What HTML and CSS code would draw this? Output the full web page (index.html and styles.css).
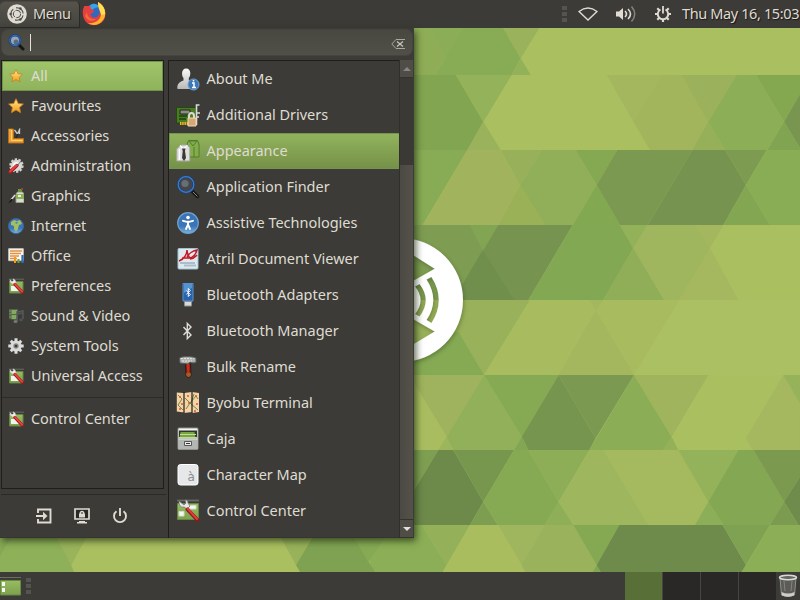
FILE: index.html
```html
<!DOCTYPE html>
<html lang="en">
<head>
<meta charset="utf-8">
<title>Desktop</title>
<link rel="stylesheet" href="styles.css">
</head>
<body>
<svg class="defs" width="0" height="0" aria-hidden="true">
<defs>
<linearGradient id="gold" x2="0" y2="1"><stop stop-color="#ffeb91"/><stop offset="1" stop-color="#f09a16"/></linearGradient>
<linearGradient id="blue" x2="0" y2="1"><stop stop-color="#3d72b4"/><stop offset=".65" stop-color="#3975b8"/><stop offset="1" stop-color="#79b5e4"/></linearGradient>
<linearGradient id="silver" x2="0" y2="1"><stop stop-color="#fafafa"/><stop offset="1" stop-color="#b9b9b9"/></linearGradient>
<linearGradient id="leaf" x2="0" y2="1"><stop stop-color="#98bb64"/><stop offset="1" stop-color="#7da14c"/></linearGradient>
<symbol id="star" viewBox="0 0 16 16"><path d="M8 .7l2.200 4.700 5.200.6-3.800 3.500 1 5.200L8 12.100l-4.600 2.600 1-5.200L.6 6l5.200-.6z" fill="url(#gold)" stroke="#c97b1d" stroke-width=".8"/></symbol>
<symbol id="tools" viewBox="0 0 16 16"><path d="M.5 1h5v9.500h10V15H.5z" fill="#eba139" stroke="#b76c16"/><path d="M1.500 2h2v10.500h11" fill="none" stroke="#ffd06c"/><path d="M6.500 2l3 4L12 .5M11.500 1v5" stroke="#c7cbc8" fill="none" stroke-width="1.300"/><path d="M10 6l-2 4" stroke="#292a27" stroke-width="1.500"/></symbol>
<symbol id="admin" viewBox="0 0 16 16"><circle cx="8.500" cy="7.500" r="5.700" fill="#dcdcda" stroke="#d1d1cf" stroke-width="3" stroke-dasharray="2.200 1.300"/><circle cx="8" cy="7" r="3" fill="#f6f6f3"/><path d="M2 14L9 7.500" stroke="#a51d20" stroke-width="3.400" stroke-linecap="round"/><path d="M2 13.500L8.500 7.500" stroke="#ef3c3e" stroke-width="1.800" stroke-linecap="round"/><path d="M9 8l4-5" stroke="#73736f" stroke-width="1"/></symbol>
<symbol id="paint" viewBox="0 0 16 16"><path d="M8 6l1.500-2h5L16 6v8.500H8z" fill="#d9ddd0" stroke="#999f8c"/><path d="M8 6h8v5H8z" fill="#8bb057"/><path d="M10 1h4v3h-4z" fill="#689340"/><path d="M13 0h2v2h-2z" fill="#b33630"/><path d="M10 7h3v2h-3z" fill="#e7efdc"/><path d="M7 7L3 12" stroke="#d6d7d6" stroke-width="1.600"/><path d="M5 11l-2 3-3 1c2-1 2-3 3-4z" fill="#181817"/></symbol>
<symbol id="globe" viewBox="0 0 16 16"><circle cx="8" cy="8" r="7.600" fill="url(#blue)" stroke="#3468a4" stroke-width=".8"/><path d="M3 4l3-2 3 1 3-1 2 4-3 1-1 4-2 3-2-3V8L3 7z" fill="#a4be62"/><path d="M8 4l2-.5L9 6 7 5z" fill="#4a86be"/></symbol>
<symbol id="office" viewBox="0 0 16 16"><path d="M.7.700h14.600v12H.7z" fill="#fcfaf4" stroke="#c5c5bf"/><path d="M2 3h12M2 5.500h11M2 8h9M2 10.500h7" stroke="#de9140" stroke-width="1.400"/><path d="M7 9v6" stroke="#f49820" stroke-width="2"/><path d="M10.500 11v4" stroke="#70a12e" stroke-width="2"/><path d="M14.500 7v8" stroke="#326fb9" stroke-width="2.300"/></symbol>
<symbol id="control" viewBox="0 0 24 24"><path d="M1 1.500h22" stroke="#686966" stroke-width="1.800"/><path d="M1.500 4.500h21v16h-21z" fill="url(#leaf)" stroke="#648744"/><path d="M13 6.500h7v3.500h-7zM3 12.500h5v4.500H3z" fill="#f5f5f5" stroke="#d2ddc4"/><path d="M3 2c-.4 4 2 7 5 6l3 2 3-3-2-3c0-2-1-3-3-3l1 3-2 2z" fill="#e7e8e6" stroke="#737671" stroke-width=".8"/><path d="M11.500 10.500l10 10.500" stroke="#8e191b" stroke-width="3.800" stroke-linecap="round"/><path d="M11.500 9.500l9.500 10.500" stroke="#e13c3c" stroke-width="2" stroke-linecap="round"/></symbol>
<symbol id="control-small" viewBox="0 0 16 16"><path d="M1 1.200h15" stroke="#686966"/><path d="M1.500 3.500h13.500v11.500H1.500z" fill="url(#leaf)" stroke="#648744"/><path d="M3 8h4l4 5H3z" fill="#f1f3ee"/><path d="M2 1.500v2l2 2 2.500 1L8 4.500 7 2 5 .8l.5 2-1.500 1z" fill="#eeefec" stroke="#c9cbc7" stroke-width=".5"/><path d="M7 6.500l7.500 8" stroke="#8e191b" stroke-width="3.200" stroke-linecap="round"/><path d="M7 6l7.200 7.800" stroke="#ea4141" stroke-width="1.900" stroke-linecap="round"/></symbol>
<symbol id="media" viewBox="0 0 16 16"><path d="M1 1h9v12l-4-1-5-1z" fill="#4f6543"/><path d="M3.500 2H9v4H3.500zM3.500 7H9v4H3.500z" fill="#86a865"/><path d="M1.500 3h1M1.500 6h1M1.500 9h1" stroke="#a8b49c"/><path d="M9 12V4l6-1v8M9 6l6-1" stroke="#55585b" stroke-width="1.500" fill="none"/><ellipse cx="7.500" cy="13.500" rx="2" ry="1.500" fill="#74797b"/><ellipse cx="13" cy="11.800" rx="2" ry="1.500" fill="#4e5154"/></symbol>
<symbol id="gear" viewBox="0 0 16 16"><g stroke="#dcdddb" stroke-width="3"><path d="M8 .3v15.400M.3 8h15.400M2.700 2.700l10.600 10.600M13.300 2.700L2.700 13.300"/></g><circle cx="8" cy="8" r="5.600" fill="#dadbd9"/><circle cx="8" cy="8" r="2.700" fill="#8a8c87"/><circle cx="8" cy="8" r="1.300" fill="#363833"/></symbol>
<symbol id="lens" viewBox="0 0 24 24"><path d="M16 16l5.500 5.500" stroke="#171816" stroke-width="3.500" stroke-linecap="round"/><path d="M17 17l4.500 4.500" stroke="#85877f" stroke-width="1"/><circle cx="10" cy="9.500" r="7.800" fill="#43464a" stroke="#1b427e" stroke-width="2.800"/><circle cx="10" cy="9.500" r="7.800" fill="none" stroke="#427bc2" stroke-width="1.200"/><circle cx="9" cy="8.500" r="3.600" fill="#85898e" opacity=".6"/></symbol>
<symbol id="lens-small" viewBox="0 0 17 17"><path d="M11 11l4 4" stroke="#171816" stroke-width="3" stroke-linecap="round"/><circle cx="7" cy="6.500" r="5.200" fill="#98a8bc" stroke="#1b427e" stroke-width="2.400"/><circle cx="7" cy="6.500" r="5.200" fill="none" stroke="#3c70b4"/><circle cx="8" cy="8" r="2.500" fill="#5b6b80"/></symbol>
<symbol id="person" viewBox="0 0 24 24"><path d="M1.500 22c-.8-5 2-7 6-8.500V11c-2-2-2.500-9.500 2.700-9.500S15 9 12.800 11v2.500c4 1.500 6 4 5.500 8.500z" fill="url(#silver)"/><circle cx="17.500" cy="17.500" r="5.500" fill="#3b77b9" stroke="#79a5ce"/><path d="M16 16h2v4.500M16 20.500h4M17.500 13v1.600" fill="none" stroke="#fff" stroke-width="1.500"/></symbol>
<symbol id="driver" viewBox="0 0 24 24"><path d="M.5 4.500H20V20H.5z" fill="#4b7b21" stroke="#24480f"/><path d="M4 7h10v4H4z" fill="#8a8c85" stroke="#222"/><path d="M3 13h8M3 16h7" stroke="#244f18" stroke-width="2"/><path d="M4 20.500h9" stroke="#f0bb24" stroke-width="3" stroke-dasharray="1.500 .7"/><path d="M20.500 22V2h3M21 10h3M21 14h2" stroke="#d9dbd6" stroke-width="1.600" fill="none"/><path d="M13 15v-2c0-4 5-4 5 0v2" fill="none" stroke="#dadbd4" stroke-width="2"/><path d="M12 15h8v8h-8z" fill="#d6a878" stroke="#f1d7ae"/></symbol>
<symbol id="shirts" viewBox="0 0 24 24"><path d="M11 5l1.500-3.500h9L23 5v13h-9z" fill="#83ad4b" stroke="#537c2d"/><path d="M13 2l4 5 4-5M14 2h6M18 8v10" stroke="#537c2d" fill="none"/><path d="M.8 10l3-3 2-1h5l3 2.500V22H.8z" fill="#dfe0dd" stroke="#a6a8a2"/><path d="M4 6.500l3.500 3.500 4-3.500M3.500 10v11" stroke="#fff" fill="none" stroke-width="1.300"/><path d="M6 9.500h3.500L9 12l1 7-2 3-2-3 .700-7z" fill="#393a38"/></symbol>
<symbol id="access" viewBox="0 0 24 24"><circle cx="12" cy="12" r="10.300" fill="url(#blue)" stroke="#6fa3d1" stroke-width="1.200"/><circle cx="12" cy="6.500" r="1.800" fill="#fff"/><path d="M7 9.800l4 1h2l4-1M12 11v3M12 13.500l-2 4.500M12 13.500l2 4.500" stroke="#fff" stroke-width="1.900" stroke-linecap="round" fill="none"/></symbol>
<symbol id="atril" viewBox="0 0 24 24"><rect x="2" y="1.500" width="20" height="20.500" rx="1" fill="#dfe9ed" stroke="#9cc4d4"/><path d="M4 16h15M8 18.500h12" stroke="#a9becb" stroke-width="2"/><path d="M3 14c6-2 8-8 8-11 0 3 2 8 4 9M6 11h7c4 0 7-4 8-8-6 1-8 4-10 7M14 12c4 0 5-2 7-4" fill="none" stroke="#c51623" stroke-width="1.500"/></symbol>
<symbol id="usb" viewBox="0 0 24 24"><path d="M7 .5h10V18H7z" fill="#2862b0" stroke="#5a92cd"/><path d="M8 1h8v4L8 10z" fill="#5393d0"/><path d="M8.500 18.500h7V23h-7z" fill="#d7dad8" stroke="#8c918d"/><path d="M10.300 7.500l4 4-2 2V5.500l2 2-4 4" stroke="#fff" fill="none"/></symbol>
<symbol id="bt" viewBox="0 0 24 24"><path d="M7.500 8l7.500 8-3.700 3.500V4.500L15 8l-7.500 8" fill="none" stroke="#deded9" stroke-width="1.400"/></symbol>
<symbol id="hammer" viewBox="0 0 24 24"><path d="M9.500 9h5L15 20c0 3-5 3-5 0z" fill="#742b18" stroke="#301a13"/><path d="M10.500 9l3-1v7l-2 5z" fill="#d9251a"/><path d="M10 19c0 4 5 4 5 0l-1-1.500h-3z" fill="#a75b20"/><path d="M3.500 3C6 1 16 1 20 3v4.500l-3 .5c-2-1-4-1-5 1L4 8z" fill="#aeb2ae" stroke="#555b57"/><path d="M5 3.500l13 .2M6 6h10" stroke="#e3e5e2" stroke-dasharray="2 1"/></symbol>
<symbol id="map" viewBox="0 0 24 24"><path d="M.8 1.500L8 2v19.500l-7.200-1zM8 2l8-1v20l-8 1zM16 1l7 1v19l-7 1z" fill="#f4d3a6"/><path d="M2 4l4 4-4 6 5 5M9 7l5 5 6-7 2 3M10 18l4-6 8 7M18 3l-3 9" fill="none" stroke="#748b44"/><path d="M3 6h2M5 13h2M3 18h2M11 5h2M12 12h2M19 5h2M20 13h2M18 20h2" stroke="#d35a3b" stroke-width="1.500"/><path d="M8 1v21M16 1v21" stroke="#201d1a" stroke-width="1.200"/></symbol>
<symbol id="drawer" viewBox="0 0 24 24"><rect x="2" y="1" width="20" height="21.500" rx="1" fill="url(#silver)" stroke="#8f928e"/><path d="M3 3.500h18v8H3z" fill="#30382a"/><path d="M4.500 5h14l1 6.500h-16z" fill="#78a541"/><path d="M4 7.500h16M3 10.500h18" stroke="#c1da9a"/><path d="M2.500 11.500h19V22h-19z" fill="#b3b6b3"/><path d="M2.500 12h19" stroke="#e5e6e4"/><path d="M8.500 14.500h7v4h-7z" fill="#eee" stroke="#555"/><path d="M10 16.500h4" stroke="#333"/></symbol>
<symbol id="charmap" viewBox="0 0 24 24"><rect x="2" y="1.500" width="20" height="20.500" rx="2.500" fill="#e5e7e9" stroke="#fff"/><text x="11.500" y="17.500" class="glyph">à</text></symbol>
</defs>
</svg>

<svg class="wallpaper" viewBox="0 0 800 600" aria-hidden="true">
<defs>
<filter id="soft" x="-20%" y="-20%" width="140%" height="140%"><feDropShadow dx="1" dy="2" stdDeviation="2" flood-color="#3c5420" flood-opacity=".5"/></filter>
</defs>
<rect width="800" height="600" fill="#aabf60"/>
<g transform="translate(400 20) scale(.33333)">
<path fill="#8fad57" d="M0 24H190L105 165H0z"/><path fill="#8bad57" d="M90 24H190L140 115z"/><path fill="#88ab55" d="M190 24H310L362 115 335 165H105z"/><path fill="#9ab25b" d="M310 24H418L362 115z"/><path fill="#93b159" d="M362 115L392 165H335z"/>
<path fill="#82a552" d="M0 165H168L250 305 202 390H0z"/><path fill="#93b25a" d="M168 165H335L250 305z"/><path fill="#9ab25b" d="M250 305L302 390H202z"/><path fill="#a4b75e" d="M620 165H785L700 305z"/><path fill="#a2b55d" d="M785 165H845L930 305 877 390H750L700 305z"/><path fill="#9bb15b" d="M845 165H1010L925 305z"/><path fill="#8cae56" d="M1010 165H1068L1152 305 1102 390H975L925 305z"/><path fill="#96b059" d="M925 305L975 390H877z"/><path fill="#83a850" d="M1068 165H1200V222L1152 305z"/><path fill="#78964f" d="M1200 222L1152 305 1200 385z"/><path fill="#81a453" d="M1152 305L1200 385V390H1102z"/>
<path fill="#88ac55" d="M0 390H202L68 615H0z"/><path fill="#a1b45d" d="M202 390H302L360 495 295 615H68z"/><path fill="#99b05b" d="M302 390H427L360 495z"/><path fill="#9ab158" d="M360 495L295 615H435z"/><path fill="#91af59" d="M427 390H527L590 495 518 615H435L360 495z"/><path fill="#85a852" d="M527 390H652L590 495z"/><path fill="#83a852" d="M590 495L518 615H660z"/><path fill="#7b9950" d="M652 390H877L743 615H660L590 495z"/><path fill="#76934f" d="M877 390H975L1038 495 970 615H743z"/><path fill="#7d9b51" d="M975 390H1100L1038 495z"/><path fill="#88ad55" d="M1100 390H1200V615H1110L1038 495z"/><path fill="#82a652" d="M1038 495L1110 615H970z"/>
<path fill="#7e9d52" d="M0 615H295L160 840H0z"/><path fill="#82a553" d="M209 615H295L248 690z"/><path fill="#76934f" d="M295 615H518L385 840H160z"/><path fill="#708f4d" d="M248 690L342 840H160z"/><path fill="#83a853" d="M518 615H660L700 685 610 840H385z"/><path fill="#92b159" d="M660 615H743L700 685z"/><path fill="#9fb55e" d="M743 615H885L930 685 838 840H792L700 685z"/><path fill="#90ae57" d="M700 685L792 840H610z"/><path fill="#a4b75e" d="M885 615H970L930 685z"/><path fill="#a5b85f" d="M930 685L1015 840H838z"/>
</g>
<g transform="translate(400 290) scale(.33333)">
<path fill="#9ab15b" d="M0 30H390L252 255H0z"/><path fill="#86aa54" d="M175 125L252 255H0L0 180z"/><path fill="#a8bb5e" d="M390 30H838L702 255H252z"/><path fill="#a4b75e" d="M587 62L702 255H476z"/><path fill="#a3b75e" d="M570 30H610L587 62z"/><path fill="#abc062" d="M838 30H1200V255H702z"/>
<path fill="#9fb35e" d="M0 255H252L140 440 42 280z"/><path fill="#a9bd60" d="M42 280L140 440 115 480H0V255z"/><path fill="#9db55b" d="M140 440L160 480H115z"/><path fill="#91b059" d="M252 255L365 440 342 480H160L140 440z"/><path fill="#86a953" d="M252 255H476L365 440z"/><path fill="#76954f" d="M476 255L587 445 568 480H385L365 440z"/><path fill="#7b9951" d="M476 255H702L587 445z"/><path fill="#82a653" d="M365 440L385 480H342z"/><path fill="#8bad56" d="M702 255L815 440 790 480H568z"/><path fill="#a0b45d" d="M702 255H925L815 440z"/><path fill="#94b158" d="M815 440L835 480H790z"/><path fill="#a5b75f" d="M1150 255L1200 340V480H1058L1038 445z"/><path fill="#96b25a" d="M1150 255H1200V340z"/>
<path fill="#7e9f52" d="M0 480H115L42 600H0z"/><path fill="#6d8a4b" d="M115 480H160L250 635 210 705H0V670z"/><path fill="#77974f" d="M160 480H342L250 635z"/><path fill="#7d9e51" d="M250 635L210 705H293z"/><path fill="#85aa53" d="M342 480H385L476 635 435 705H293L250 635z"/><path fill="#8dae57" d="M385 480H568L476 635z"/><path fill="#8eaf58" d="M476 635L435 705H520z"/><path fill="#9eb65e" d="M568 480H610L745 705H520L476 635z"/><path fill="#a5b95e" d="M610 480H835L925 635 885 705H745z"/><path fill="#94b25a" d="M835 480H1015L925 635z"/><path fill="#8dae58" d="M925 635L970 705H885z"/><path fill="#83a752" d="M1015 480H1060L1152 635 1110 705H970L925 635z"/><path fill="#7b9a50" d="M1060 480H1200V560L1152 635z"/><path fill="#6f8c4d" d="M1200 560L1152 635 1195 705H1200z"/><path fill="#7b9b51" d="M1152 635L1195 705H1110z"/>
<path fill="#8bae56" d="M-130 705H65L140 825 128 846H-80z"/><path fill="#94b159" d="M65 705H210L140 825z"/><path fill="#a9bd5f" d="M210 705H295L375 846H128z"/><path fill="#9fb55e" d="M295 705H435L365 825z"/><path fill="#9ab25b" d="M435 705H520L590 825 578 846H375L365 825z"/><path fill="#85a852" d="M520 705H658L590 825z"/><path fill="#82a752" d="M590 825L578 846H602z"/><path fill="#6f8b4c" d="M658 705H968L1038 825 1025 846H602L590 825z"/><path fill="#7fa252" d="M968 705H1110L1038 825z"/><path fill="#8bae56" d="M1110 705H1200V846H1025z"/>
</g>
<path fill="#8db058" d="M0 525H93L71 565 74 572H0z"/><path fill="#84a854" d="M0 525H18L0 556z"/><path fill="#9ab45c" d="M50 525H93L71 565z"/><path fill="#98b25b" d="M274 525H320L296 565z"/><path fill="#7fa252" d="M320 525H347L375 572H300L296 565z"/><path fill="#86a954" d="M347 525H394L368 562z"/>
<path filter="url(#soft)" fill="#fff" fill-rule="evenodd" d="M401 238a62 62 0 0 1 0 124a62 62 0 0 1 0-124zM413 255L434.700 268.700 413 281zM413 319L434.700 331.500 413 344.500zM426.500 279.500L431.500 277Q446 300 431.500 323L426.500 320Q440 300 426.500 279.500zM415 286.500L419.500 284Q432 300 419.500 316.500L415 314Q426 300 415 286.500z"/>
</svg>

<div class="desktop">
<header class="panel top">
<button class="menu-button"><svg width="20" height="20" viewBox="0 0 20 20"><circle cx="10" cy="10" r="9.800" fill="#dfdbd2"/><circle cx="10" cy="10" r="6.200" fill="none" stroke="#4b4a45" stroke-width="1.100" stroke-dasharray="10 3" stroke-dashoffset="-1.500"/><circle cx="10" cy="10" r="3.700" fill="none" stroke="#4b4a45" stroke-width="1" stroke-dasharray="6.500 1.250"/><circle cx="3.600" cy="10" r="1.200" fill="#4b4a45"/><circle cx="13.300" cy="4.500" r="1.200" fill="#4b4a45"/><circle cx="13.300" cy="15.500" r="1.200" fill="#4b4a45"/></svg><span>Menu</span></button>
<svg class="firefox" width="24" height="24" viewBox="0 0 24 24"><circle cx="12" cy="11.500" r="9.500" fill="#3268bd"/><path d="M10 2c4-1 6 1 7 3l-4 1-3 2-4-3z" fill="#36a4e7"/><path d="M2.300 4C0 8 0 15 4 20c5 5 14 4 18-2 3-6 1-13-5-17 1 4 2 6 1 9-1 6-6 7-9 4-1-2 0-3 2-3l1-3-3-1-1-3z" fill="#e54040"/><path d="M16 0c8 4 9 13 5 18-4 6-11 6-15 3 8 1 13-4 13-9-1-3-3-5-3-12z" fill="#ffb52b"/><path d="M16 0c5 3 7 7 7 12l-4 1c0-4-3-7-3-13z" fill="#ffdf55"/><path d="M5 10c0 5 4 8 9 7-3 3-9 2-11-3z" fill="#f36a35"/></svg>
<div class="tray">
<i class="grip"></i>
<svg class="wifi" width="20" height="16" viewBox="0 0 20 16"><path d="M1 5.500Q10-1.500 19 5.500L10 14z" fill="none" stroke="#dfdbd2" stroke-width="1.400"/></svg>
<svg class="volume" width="20" height="18" viewBox="0 0 20 18"><path d="M0 6.500h3L7 3v12l-4-3.500H0z" fill="#dfdbd2"/><path d="M9 6q3 3 0 6M12 4q5 5 0 10" fill="none" stroke="#dfdbd2" stroke-width="1.600"/><path d="M15.500 1.500q6.500 7.500 0 15" fill="none" stroke="#85837d" stroke-width="1.500"/></svg>
<svg class="session" width="18" height="18" viewBox="0 0 18 18"><g stroke="#dfdbd2" fill="none"><path d="M6.500 4.500a5.200 5.200 0 1 0 5 0" stroke-width="1.900"/><path d="M9 1v7.500" stroke-width="1.800"/><path d="M9 14v3M1 9h3M14 9h3M3.300 3.300l2 2M14.700 3.300l-2 2M3.300 14.700l2-2M14.700 14.700l-2-2" stroke-width="2.200"/></g></svg>
<time>Thu May 16, 15:03</time>
</div>
</header>

<main>
<section class="menu">
<div class="search"><svg width="17" height="17"><use href="#lens-small"/></svg><i class="caret"></i><svg class="clear" width="15" height="12" viewBox="0 0 15 12"><path d="M14 1.500H5L.8 6 5 10.500h9" fill="none" stroke="#aaa79f"/><path d="M6 3.500l6 5M12 3.500l-6 5" stroke="#c9c5bc" stroke-width="1.200"/></svg></div>
<div class="columns">
<div class="side">
<nav class="categories">
<a class="selected"><svg><use href="#star"/></svg>All</a>
<a><svg><use href="#star"/></svg>Favourites</a>
<a><svg><use href="#tools"/></svg>Accessories</a>
<a><svg><use href="#admin"/></svg>Administration</a>
<a><svg><use href="#paint"/></svg>Graphics</a>
<a><svg><use href="#globe"/></svg>Internet</a>
<a><svg><use href="#office"/></svg>Office</a>
<a><svg><use href="#control-small"/></svg>Preferences</a>
<a><svg><use href="#media"/></svg>Sound &amp; Video</a>
<a><svg><use href="#gear"/></svg>System Tools</a>
<a><svg><use href="#control-small"/></svg>Universal Access</a>
<hr>
<a><svg><use href="#control-small"/></svg>Control Center</a>
</nav>
<div class="actions">
<svg width="16" height="16" viewBox="0 0 16 16"><path d="M2 5V1.500h12.500v13H2V11M0 8h9" fill="none" stroke="#dfdbd2" stroke-width="1.900"/><path d="M7 3.800L11.500 8 7 12.200z" fill="#dfdbd2"/></svg>
<svg width="16" height="16" viewBox="0 0 16 16"><path d="M1 1h14v10H1z" fill="#292925" stroke="#dfdbd2" stroke-width="1.700"/><path d="M5 13h6v1h2v1.500H3V14h2z" fill="#dfdbd2"/><path d="M5 5.500h6v4H5z" fill="#dfdbd2"/><path d="M6.300 6V4.500q1.700-2 3.400 0V6" fill="none" stroke="#dfdbd2" stroke-width="1.300"/></svg>
<svg width="16" height="16" viewBox="0 0 16 16"><path d="M4.500 3.300a6 6 0 1 0 7 0" fill="none" stroke="#dfdbd2" stroke-width="1.900"/><path d="M8 0v8" stroke="#dfdbd2" stroke-width="1.900"/></svg>
</div>
</div>
<div class="apps">
<a><svg><use href="#person"/></svg>About Me</a>
<a><svg><use href="#driver"/></svg>Additional Drivers</a>
<a class="selected"><svg><use href="#shirts"/></svg>Appearance</a>
<a><svg><use href="#lens"/></svg>Application Finder</a>
<a><svg><use href="#access"/></svg>Assistive Technologies</a>
<a><svg><use href="#atril"/></svg>Atril Document Viewer</a>
<a><svg><use href="#usb"/></svg>Bluetooth Adapters</a>
<a><svg><use href="#bt"/></svg>Bluetooth Manager</a>
<a><svg><use href="#hammer"/></svg>Bulk Rename</a>
<a><svg><use href="#map"/></svg>Byobu Terminal</a>
<a><svg><use href="#drawer"/></svg>Caja</a>
<a><svg><use href="#charmap"/></svg>Character Map</a>
<a><svg><use href="#control"/></svg>Control Center</a>
</div>
<div class="scrollbar"><i class="step up"></i><i class="thumb"></i><i class="step down"></i></div>
</div>
</section>
</main>

<footer class="panel bottom">
<svg class="show" width="22" height="20" viewBox="0 0 22 20"><path d="M0 1.500h21" stroke="#69705c"/><path d="M.5 4.500h20V19H.5z" fill="url(#leaf)" stroke="#668a42"/><path d="M2 6h3v4H2zM2 12h3v4H2z" fill="#f4f6f1"/></svg>
<i class="grip"></i>
<div class="workspaces"><i class="active"></i><i></i><i></i><i></i></div>
<svg class="trash" width="20" height="24" viewBox="0 0 20 24"><path d="M2 4l1.500 17q6.500 3 13 0L18 4z" fill="#5c5b57" stroke="#8f908c"/><path d="M3.500 18q6.500 3 13 0l-.5 3.500q-6 2.500-12 0z" fill="#cdcecb"/><ellipse cx="10" cy="3.500" rx="8.500" ry="2.200" fill="#65655f" stroke="#d8dad7" stroke-width="1.500"/><path d="M6 7l1 10M14 7l-1 10" stroke="#85857f"/></svg>
</footer>
</div>
</body>
</html>
```

FILE: styles.css
```css
* { box-sizing: border-box; }
body { margin: 0; width: 800px; height: 600px; overflow: hidden; color: #dfdbd2; font: 14.5px/20px "Noto Sans", "Open Sans", sans-serif; }
svg { display: block; flex-shrink: 0; }
.defs { position: absolute; }
.wallpaper { position: absolute; inset: 0; width: 800px; height: 600px; }
.desktop { position: relative; height: 600px; display: flex; flex-direction: column; }
.panel { height: 28px; background: #3c3b37; display: flex; align-items: center; }
.top { text-shadow: 1px 1px 1px #171714; }
.menu-button { width: 80px; height: 27px; padding: 0 0 0 7px; display: flex; align-items: center; gap: 6px; color: inherit; font: inherit; text-shadow: inherit; background: linear-gradient(#55534b, #45443f); border: 1px solid #2b2a27; border-left: 0; border-top-color: #484740; border-radius: 5px 5px 0 0; }
.menu-button span { padding-bottom: 2px; letter-spacing: -.4px; }
.firefox { margin-left: 2px; }
.tray { margin-left: auto; display: flex; align-items: center; }
.grip { width: 5px; height: 17px; background: repeating-linear-gradient(#555450 0 4px, transparent 4px 6px); }
.wifi { margin-left: 11px; }
.volume { margin-left: 18px; }
.session { margin-left: 18px; }
.tray time { width: 118px; margin-left: 10px; padding-bottom: 2px; white-space: nowrap; letter-spacing: -.38px; }
main { flex: 1; }
.menu { width: 414px; height: 510px; padding: 1px 1px 0; background: #3c3b37; border-bottom: 1px solid #353430; box-shadow: 2px 3px 7px rgba(35, 48, 20, .75); }
.search { height: 27px; padding: 0 6px; display: flex; align-items: center; border-radius: 7px; background: linear-gradient(#484740, #504f48); border: 1px solid #45443e; }
.caret { width: 1px; height: 17px; margin-left: 5px; background: #e8e3d9; }
.clear { margin-left: auto; margin-top: 3px; }
.columns { display: flex; height: 478px; margin-top: 4px; }
.side { width: 167px; }
.categories { width: 163px; height: 429px; border: 1px solid #1f1e1c; }
.categories a { display: flex; align-items: center; height: 30px; padding: 0 0 2px 6px; gap: 7px; letter-spacing: -.06px; white-space: nowrap; }
.categories svg { width: 16px; height: 16px; margin-top: 2px; }
.categories .selected { background: linear-gradient(#9fc46a, #8eb35b); border: 1px solid #71934a; padding-left: 6px; gap: 8px; }
.categories .selected svg { width: 14px; height: 14px; }
.categories hr { height: 1px; border: 0; margin: 6px 0 6px; background: #2c2b28; }
.actions { height: 48px; width: 165px; margin-top: 5px; border-top: 1px solid #2b2a27; display: flex; align-items: center; gap: 22px; padding: 0 0 5px 35px; }
.apps { width: 231px; border-left: 1px solid #1f1e1c; border-top: 1px solid #1f1e1c; overflow: hidden; }
.apps a { height: 36px; display: flex; align-items: center; gap: 7px; padding: 0 0 2px 6.500px; white-space: nowrap; letter-spacing: -.02px; }
.apps svg { width: 24px; height: 24px; margin-top: 2px; }
.apps .selected { background: linear-gradient(#91b35d, #769148); border: 1px solid #74954d; border-width: 1px 0 1px 1px; padding-left: 5.500px; }
.scrollbar { width: 14px; margin-left: auto; border-left: 1px solid #302f2b; display: flex; flex-direction: column; background: #3b3935; }
.step { height: 18px; background: #504d47; border-bottom: 1px solid #35332f; display: grid; place-items: center; }
.step::before { content: ""; border: 4px solid transparent; }
.up::before { border-top: 0; border-bottom-color: #85868a; }
.down::before { border-bottom: 0; border-top-color: #e0e0dc; }
.thumb { flex: 1; margin-top: 87px; background: linear-gradient(90deg, #4b4944, #55524a); border-bottom: 1px solid #35332f; }
.glyph { font: 12px "DejaVu Sans", sans-serif; fill: #888c8f; }
.bottom { height: 28px; }
.show { margin-left: 0; }
.bottom .grip { margin-left: 4px; }
.workspaces { margin-left: auto; height: 28px; display: flex; gap: 1px; background: #464540; }
.workspaces i { width: 37px; background: #292826; }
.workspaces .active { background: #586f38; }
.trash { margin: 0 2px; }
```
